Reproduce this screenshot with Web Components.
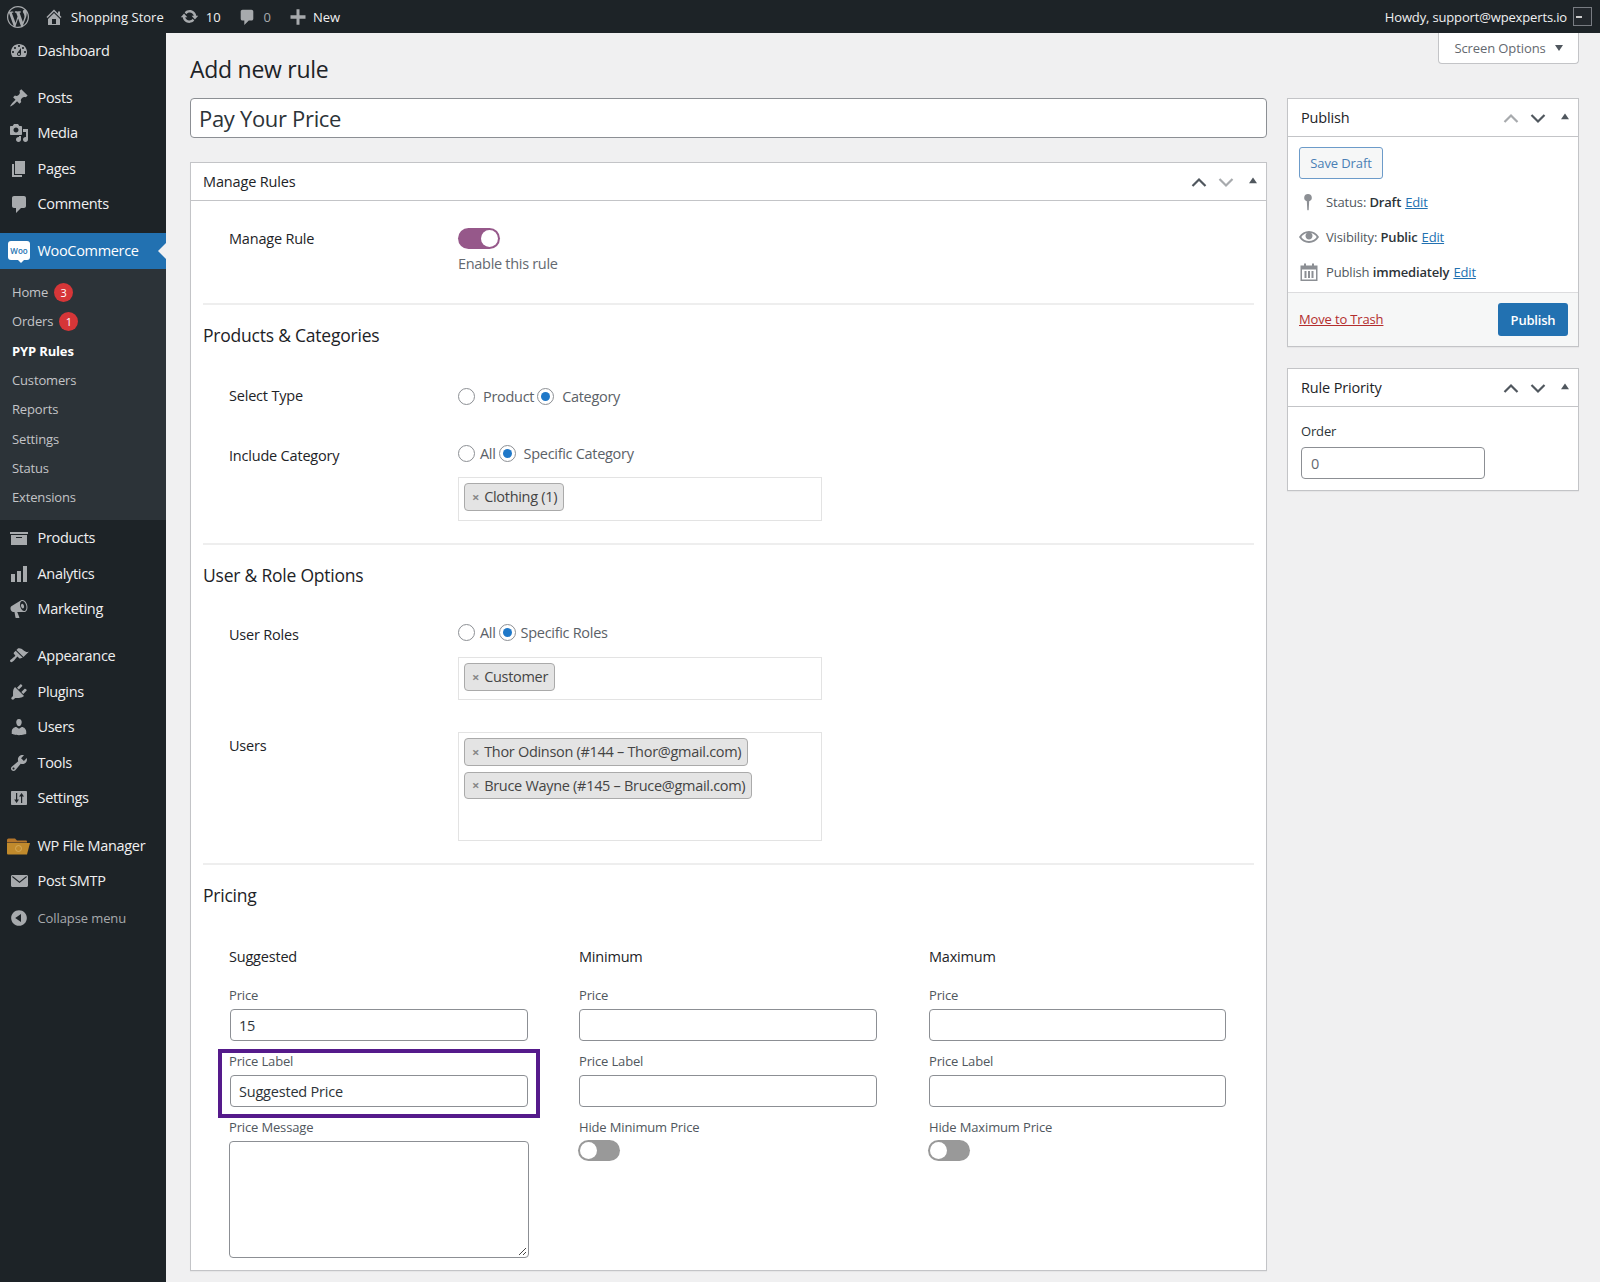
<!DOCTYPE html>
<html lang="en"><head><meta charset="utf-8"><title>Add new rule</title>
<style>
html,body{margin:0;padding:0;height:1282px;overflow:hidden;background:#f0f0f1;font-family:"Open Sans","Noto Sans",sans-serif;font-size:14px;color:#1d2327}
</style></head><body>
<wp-app></wp-app>
<script>
const P={
wp:'M20 10c0-5.51-4.49-10-10-10C4.48 0 0 4.49 0 10c0 5.52 4.48 10 10 10 5.51 0 10-4.48 10-10zM7.78 15.37L4.37 6.22c.55-.02 1.17-.08 1.17-.08.5-.06.44-1.13-.06-1.11 0 0-1.45.11-2.37.11-.18 0-.37 0-.58-.01C4.12 2.69 6.87 1.11 10 1.11c2.33 0 4.45.87 6.05 2.34-.68-.11-1.65.39-1.65 1.58 0 .74.45 1.36.9 2.1.35.61.55 1.36.55 2.46 0 1.49-1.4 5-1.4 5l-3.03-8.37c.54-.02.82-.17.82-.17.5-.05.44-1.25-.06-1.22 0 0-1.44.12-2.38.12-.87 0-2.33-.12-2.33-.12-.5-.03-.56 1.2-.06 1.22l.92.08 1.26 3.41zM17.41 10c.24-.64.74-1.87.43-4.25.7 1.29 1.05 2.71 1.05 4.25 0 3.29-1.73 6.24-4.4 7.78.97-2.59 1.94-5.2 2.92-7.78zM6.1 18.09C3.12 16.65 1.11 13.53 1.11 10c0-1.3.23-2.48.72-3.59C3.25 10.3 4.67 14.2 6.1 18.09zm4.03-6.63l2.58 6.98c-.86.29-1.76.45-2.71.45-.79 0-1.57-.11-2.29-.33.81-2.38 1.62-4.74 2.42-7.1z',
home:'M16 8.5l1.53 1.53-1.06 1.06L10 4.62l-6.47 6.47-1.06-1.06L10 2.5l4 4v-2h2v4zm-6-2.46l6 5.99V18H4v-5.97zM12 17v-5H8v5h4z',
update:'M10.2 3.28c3.53 0 6.43 2.61 6.92 6h2.08l-3.5 4-3.5-4h2.32c-.45-1.97-2.21-3.45-4.32-3.45-1.45 0-2.73.71-3.54 1.78L4.95 5.66C6.23 4.2 8.11 3.28 10.2 3.28zm-.4 13.44c-3.52 0-6.43-2.61-6.92-6H.8l3.5-4c1.17 1.33 2.33 2.67 3.5 4H5.48c.45 1.97 2.21 3.45 4.32 3.45 1.45 0 2.73-.71 3.54-1.78l1.71 1.95c-1.28 1.46-3.15 2.38-5.25 2.38z',
comment:'M5 2h10c1.1 0 2 .9 2 2v8c0 1.1-.9 2-2 2h-3l-5 5v-5H5c-1.1 0-2-.9-2-2V4c0-1.1.9-2 2-2z',
plus:'M17.500 8.300v3.400h-6v6H8.500v-6h-6V8.300h6v-6h3v6z',
dashboard:'M3.76 16h12.48c1.1-1.37 1.76-3.11 1.76-5 0-4.42-3.58-8-8-8s-8 3.58-8 8c0 1.89.66 3.63 1.76 5zM10 4c.55 0 1 .45 1 1s-.45 1-1 1-1-.45-1-1 .45-1 1-1zM6 6c.55 0 1 .45 1 1s-.45 1-1 1-1-.45-1-1 .45-1 1-1zm8 0c.55 0 1 .45 1 1s-.45 1-1 1-1-.45-1-1 .45-1 1-1zm-5.37 5.55L12 7v6c0 1.1-.9 2-2 2s-2-.9-2-2c0-.57.24-1.08.63-1.45zM4 10c.55 0 1 .45 1 1s-.45 1-1 1-1-.45-1-1 .45-1 1-1zm12 0c.55 0 1 .45 1 1s-.45 1-1 1-1-.45-1-1 .45-1 1-1zm-5 3c0-.55-.45-1-1-1s-1 .45-1 1 .45 1 1 1 1-.45 1-1z',
post:'M10.44 3.02l1.82-1.82 6.36 6.35-1.83 1.82c-1.05-.68-2.48-.57-3.41.36l-.75.75c-.92.93-1.04 2.35-.35 3.41l-1.83 1.82-2.41-2.41-2.8 2.79c-.42.42-3.38 2.71-3.8 2.29s1.86-3.39 2.28-3.81l2.79-2.79L4.1 9.36l1.83-1.82c1.05.69 2.48.57 3.4-.36l.75-.75c.93-.92 1.05-2.35.36-3.41z',
media:'M13 11V4c0-.55-.45-1-1-1h-1.67L9 1H5L3.67 3H2c-.55 0-1 .45-1 1v7c0 .55.45 1 1 1h10c.55 0 1-.45 1-1zM7 4.5c1.38 0 2.5 1.12 2.5 2.5S8.38 9.5 7 9.5 4.5 8.38 4.5 7 5.62 4.5 7 4.5zM14 6h5v10.5c0 1.38-1.12 2.5-2.5 2.5S14 17.88 14 16.5s1.12-2.5 2.5-2.5c.17 0 .34.02.5.05V9h-3V6zm-4 8.05V13h2v3.5c0 1.38-1.12 2.5-2.5 2.5S7 17.88 7 16.5 8.12 14 9.5 14c.17 0 .34.02.5.05z',
page:'M6 15V2h10v13H6zm-1 1h8v2H3V5h2v11z',
products:'M19 4v2H1V4h18zM2 7h16v10H2V7zm11 3V9H7v1h6z',
chart:'M18 18V2h-4v16h4zm-6 0V7H8v11h4zm-6 0v-8H2v8h4z',
megaphone:'M18.15 5.94c.46 1.62.38 3.22-.02 4.48-.42 1.28-1.26 2.18-2.3 2.48-.16.06-.26.06-.4.06-.06.02-.12.02-.18.02-.06.02-.14.02-.22.02h-6.8l2.22 5.5c.02.14-.06.26-.14.34-.08.1-.24.16-.34.16H6.95c-.1 0-.26-.06-.34-.16-.08-.08-.16-.2-.14-.34l-1-5.5H4.25l-.02-.02c-.5.06-1.08-.18-1.54-.62s-.88-1.08-1.06-1.88c-.24-.8-.2-1.56-.02-2.2.18-.62.58-1.08 1.06-1.3l.02-.02 9-5.4c.1-.06.18-.1.24-.16.06-.04.14-.08.24-.12.16-.08.28-.12.5-.18 1.04-.3 2.24.1 3.22.98s1.84 2.24 2.26 3.86zm-2.58 5.98h-.02c.4-.1.74-.34 1.04-.7.58-.7.86-1.76.86-3.04 0-.64-.1-1.3-.28-1.98-.34-1.36-1.02-2.5-1.78-3.24s-1.68-1.1-2.46-.88c-.82.22-1.4.96-1.7 2-.32 1.04-.28 2.36.06 3.72.38 1.36 1 2.5 1.8 3.24.78.74 1.62 1.1 2.48.88zm-2.54-7.08c.22-.04.42-.02.62.04.38.16.76.48 1.02 1s.42 1.2.42 1.78c0 .3-.04.56-.12.8-.18.48-.44.84-.86.94-.34.1-.8-.06-1.14-.4-.36-.34-.68-.84-.86-1.46-.2-.62-.2-1.22-.08-1.7.14-.46.42-.84.92-.96.02 0 .06-.04.08-.04z',
brush:'M14.48 11.06L7.41 3.99l1.5-1.5c.5-.56 2.3-.47 3.51.32 1.21.8 1.43 1.28 2.91 2.1 1.18.64 2.45 1.26 4.45.85zm-.71.71L6.7 4.7 4.93 6.47c-.39.39-.39 1.02 0 1.41l1.06 1.06c.39.39.39 1.03 0 1.42-.6.6-1.43 1.11-2.21 1.69-.35.26-.7.53-1.01.84C1.43 13.23.4 14.75 1.4 15.74c.99.99 2.52-.03 3.82-1.37.31-.31.58-.66.84-1.01.58-.78 1.09-1.61 1.69-2.21.39-.39 1.02-.39 1.41 0l1.06 1.06c.39.39 1.02.39 1.41 0z',
plugin:'M13.11 4.36L9.87 7.6 8 5.73l3.24-3.24c.35-.34 1.05-.2 1.56.32.52.51.66 1.21.31 1.55zm-8 1.77l.91-1.12 9.01 9.01-1.19.84c-.71.71-2.63 1.16-3.82 1.16H6.14L4.9 17.26c-.59.59-1.54.59-2.12 0-.59-.58-.59-1.53 0-2.12l1.24-1.24v-3.88c0-1.13.4-3.19 1.09-3.89zm7.26 3.97l3.24-3.24c.34-.35 1.04-.21 1.55.31.52.51.66 1.21.31 1.55l-3.24 3.25z',
users:'M10 9.25c-2.27 0-2.73-3.44-2.73-3.44C7 4.02 7.82 2 9.97 2c2.16 0 2.98 2.02 2.71 3.81 0 0-.41 3.44-2.68 3.44zm0 2.57L12.72 10c2.39 0 4.52 2.33 4.52 4.53v2.49s-3.65 1.13-7.24 1.13c-3.65 0-7.24-1.13-7.24-1.13v-2.49c0-2.25 1.94-4.48 4.47-4.48z',
tools:'M16.68 9.77c-1.34 1.34-3.3 1.67-4.95.99l-5.41 6.52c-.99.99-2.59.99-3.58 0s-.99-2.59 0-3.57l6.52-5.42c-.68-1.65-.35-3.61.99-4.95 1.28-1.28 3.12-1.62 4.72-1.06l-2.89 2.89 2.82 2.82 2.86-2.87c.53 1.58.18 3.39-1.08 4.65zM3.81 16.21c.4.39 1.04.39 1.43 0 .4-.4.4-1.04 0-1.43-.39-.4-1.03-.4-1.43 0-.39.39-.39 1.03 0 1.43z',
settings:'M18 16V4c0-.55-.45-1-1-1H3c-.55 0-1 .45-1 1v12c0 .55.45 1 1 1h14c.55 0 1-.45 1-1zM7 5h1.200v6.500H10L7.600 15 5.200 11.500H7zM12 15V8.500h-2L12.600 5 15 8.500h-1.800V15z',
mail:'M19 14.5v-9c0-.83-.67-1.5-1.5-1.5H3.49c-.83 0-1.5.67-1.5 1.500v9c0 .83.67 1.5 1.5 1.5H17.5c.83 0 1.5-.67 1.5-1.5zm-1.31-9.11c.33.33.15.67-.03.84L10.500 12.100 3.300 6.230c-.18-.17-.36-.51-.03-.84s.67-.17.95.07l6.280 5.040 6.250-5.040c.28-.24.62-.4.95-.07z',
collapse:'M10 2.16c4.33 0 7.84 3.51 7.84 7.84s-3.51 7.84-7.84 7.84S2.16 14.33 2.16 10 5.71 2.16 10 2.16zm2 11.72V6.12L6.18 9.97z',
pin:'M10 1a4.200 4.200 0 0 1 1.300 8.200L10.800 18.500a.8.8 0 0 1-1.600 0L8.700 9.200A4.200 4.200 0 0 1 10 1z',
eye:'M19.7 9.4C17.7 6 14 3.9 10 3.9S2.3 6 .3 9.4L0 10l.3.6c2 3.4 5.7 5.5 9.7 5.5s7.700-2.100 9.700-5.500l.3-.6-.3-.6zM10 14.100c-3.100 0-6-1.600-7.700-4.100C3.600 8 5.700 6.600 8 6.100c-.9.6-1.500 1.700-1.500 2.900 0 1.900 1.600 3.500 3.500 3.500s3.500-1.600 3.500-3.500c0-1.200-.6-2.300-1.500-2.900 2.300.5 4.400 1.900 5.700 3.900-1.700 2.500-4.600 4.100-7.700 4.100z',
calendar:'M15 3.500h3.500V19h-17V3.500H5V1.500h2v2h6v-2h2v2zM3 7.500V17.500h14V7.500H3zM5.500 9h2v7h-2V9zm3.500 0h2v7H9V9zm3.500 0h2v7h-2V9z',
up:'M3.500 14 10 7.500 16.500 14',down:'M3.500 7 10 13.500 16.500 7',tri:'M5 14l5-7 5 7z'
};
const ic=(n,s=20,c='currentColor')=>`<svg width="${s}" height="${s}" viewBox="0 0 20 20" fill="${c}" aria-hidden="true"><path d="${P[n]}"/></svg>`;
function def(name,css,html){
  customElements.define(name,class extends HTMLElement{
    connectedCallback(){
      if(this.shadowRoot)return;
      const r=this.attachShadow({mode:'open'});
      const g=a=>this.getAttribute(a);
      r.innerHTML=`<style>${css}</style>`+(typeof html==='function'?html(g,this):html);
    }
  });
}
def('wp-adminbar',`
:host{display:flex;align-items:center;justify-content:space-between;height:33px;background:#1d2327;color:#f0f0f1;font-size:13px}
.l,.r{display:flex;align-items:center;height:100%}
.l{letter-spacing:0}.r{letter-spacing:-.15px}
.i{display:flex;align-items:center;color:#a7aaad}
.t{color:#f0f0f1}
.av{width:19px;height:19px;box-sizing:border-box;border:1px solid #787c82;background:#23282d;margin:0 8px 0 6px;display:flex;align-items:center;padding-left:2px}
.av b{display:block;width:6px;height:2px;background:#ccc}
`,()=>`<div class="l">
<span class="i" style="margin-left:7px">${ic('wp',22)}</span>
<span class="i" style="margin-left:15px">${ic('home',20)}</span><span class="t" style="margin-left:7px">Shopping Store</span>
<span class="i" style="margin-left:16px">${ic('update',19)}</span><span class="t" style="margin-left:7px">10</span>
<span class="i" style="margin-left:17px">${ic('comment',18)}</span><span style="margin-left:8px;color:#a7aaad">0</span>
<span class="i" style="margin-left:17px">${ic('plus',20)}</span><span class="t" style="margin-left:5px">New</span>
</div><div class="r"><span class="t">Howdy, support@wpexperts.io</span><span class="av"><b></b></span></div>`);

def('wp-menu-item',`
:host{display:flex;align-items:center;height:35.5px;color:#f0f0f1;font-size:14.5px;letter-spacing:-.32px;position:relative}
:host([current]){height:36px;background:#2271b1;color:#fff}
:host([current])::after{content:"";position:absolute;right:0;top:10px;border:8px solid transparent;border-right-color:#f0f0f1;border-left:0}
:host([dim]){color:#a7aaad;font-size:13px;letter-spacing:-.1px}
.tx{padding-bottom:1px}
.ic{width:37.5px;display:flex;justify-content:flex-start;padding-left:9px;box-sizing:border-box;color:#a7aaad;flex:none}
:host([current]) .ic{color:#fff}
`,(g)=>`<span class="ic">${g('icon')?ic(g('icon'),20):'<slot name="icon"></slot>'}</span><span class="tx"><slot></slot></span>`);

def('wp-submenu-item',`
:host{display:flex;align-items:center;height:29.3px;padding-left:12px;color:#c3c4c7;font-size:13px;letter-spacing:-.15px}
:host([current]){color:#fff;font-weight:700}
.b{display:inline-flex;align-items:center;justify-content:center;width:19px;height:19px;border-radius:50%;background:#d63638;color:#fff;font-size:11px;margin-left:6px;letter-spacing:0}
`,(g)=>`<span class="tx"><slot></slot></span>${g('badge')?`<span class="b">${g('badge')}</span>`:''}`);

def('wp-sidebar',`
:host{display:block;width:166px;flex:none;background:#1d2327;height:1249px}
.sp{height:11.5px}
.sub{background:#2c3338;padding:8.4px 0 8.4px;margin-bottom:.5px}
.woo{width:22px;height:19px;background:#fff;border-radius:3px;color:#2271b1;font:600 8px/19px "Open Sans",sans-serif;letter-spacing:0;text-align:center;display:block;position:relative;margin:-2px 0 0 -1px}
.woo::after{content:"";position:absolute;left:10px;bottom:-3px;border:3px solid transparent;border-top-color:#fff;border-bottom:0}
`,()=>`
<wp-menu-item icon="dashboard">Dashboard</wp-menu-item><div class="sp"></div>
<wp-menu-item icon="post">Posts</wp-menu-item>
<wp-menu-item icon="media">Media</wp-menu-item>
<wp-menu-item icon="page">Pages</wp-menu-item>
<wp-menu-item icon="comment">Comments</wp-menu-item><div style="height:11px"></div>
<wp-menu-item current><span slot="icon" class="woo">Woo</span>WooCommerce</wp-menu-item>
<div class="sub">
<wp-submenu-item badge="3">Home</wp-submenu-item>
<wp-submenu-item badge="1">Orders</wp-submenu-item>
<wp-submenu-item current>PYP Rules</wp-submenu-item>
<wp-submenu-item>Customers</wp-submenu-item>
<wp-submenu-item>Reports</wp-submenu-item>
<wp-submenu-item>Settings</wp-submenu-item>
<wp-submenu-item>Status</wp-submenu-item>
<wp-submenu-item>Extensions</wp-submenu-item>
</div>
<wp-menu-item icon="products">Products</wp-menu-item>
<wp-menu-item icon="chart">Analytics</wp-menu-item>
<wp-menu-item icon="megaphone">Marketing</wp-menu-item><div class="sp"></div>
<wp-menu-item icon="brush">Appearance</wp-menu-item>
<wp-menu-item icon="plugin">Plugins</wp-menu-item>
<wp-menu-item icon="users">Users</wp-menu-item>
<wp-menu-item icon="tools">Tools</wp-menu-item>
<wp-menu-item icon="settings">Settings</wp-menu-item><div style="height:12px"></div>
<wp-menu-item><svg slot="icon" width="25" height="20" viewBox="0 0 25 20" style="margin-left:-3px"><path d="M1 4q0-1.500 1.500-1.500H9l2 2h9q1 0 1 1v1H1z" fill="#b5762a"/><path d="M1 7h23l-3 11.500H2q-1 0-1-1z" fill="#c18a2c"/><circle cx="12.500" cy="12.500" r="3" fill="none" stroke="#d8b062" stroke-width=".8"/></svg>WP File Manager</wp-menu-item>
<wp-menu-item icon="mail">Post SMTP</wp-menu-item>
<wp-menu-item icon="collapse" dim style="margin-top:1.5px">Collapse menu</wp-menu-item>
`);

def('wp-postbox',`
:host{display:block;background:#fff;border:1px solid #c3c4c7;box-shadow:0 1px 1px rgba(0,0,0,.04);box-sizing:border-box}
.h{display:flex;align-items:center;height:38px;box-sizing:border-box;border-bottom:1px solid #c3c4c7;padding-left:var(--hp,12px);font-size:14.5px;letter-spacing:-.15px;color:#1d2327}
.h span{flex:1}
.b{display:flex;width:27px;justify-content:center;color:#50575e}
.b.off{color:#a7aaad}
.b.d{margin-right:.5px}
.last{width:26px}
`,(g)=>`<div class="h"><span>${g('heading')}</span>
<i class="b ${g('off')==='up'?'off':''}">${'<svg width="20" height="20" viewBox="0 0 20 20" fill="none" stroke="currentColor" stroke-width="2.2"><path d="'+P.up+'"/></svg>'}</i>
<i class="b d ${g('off')==='down'?'off':''}">${'<svg width="20" height="20" viewBox="0 0 20 20" fill="none" stroke="currentColor" stroke-width="2.2"><path d="'+P.down+'"/></svg>'}</i>
<i class="b last" style="color:#50575e"><svg width="16" height="16" viewBox="0 0 20 20" fill="currentColor" style="margin-top:-4px"><path d="${P.tri}"/></svg></i>
</div><slot></slot>`);

def('wp-title-input',`
:host{display:flex;align-items:center;height:40px;box-sizing:border-box;background:#fff;border:1px solid #8c8f94;border-radius:4px;padding:0 8px;font-size:22px;letter-spacing:-.32px;color:#2c3338;margin-bottom:24px}
`,`<slot></slot>`);

def('wp-input',`
:host{display:flex;align-items:center;height:32px;box-sizing:border-box;background:#fff;border:1px solid #8c8f94;border-radius:4px;padding:0 9px;font-size:14.5px;letter-spacing:-.2px;color:#2c3338}
:host(.in1){margin:0 -1px 0 1px;padding-left:8px}
`,`<slot></slot>`);

def('wp-textarea',`
:host{display:block;position:relative;height:117px;margin-right:-2px;box-sizing:border-box;background:#fff;border:1px solid #8c8f94;border-radius:4px}
svg{position:absolute;right:1px;bottom:1px}
`,`<svg width="9" height="9" viewBox="0 0 9 9" stroke="#444" fill="none" stroke-width="1"><path d="M1 8 8 1M5 8 8 5"/></svg>`);

def('wp-toggle',`
:host{display:block;width:42px;height:21px;border-radius:11px;background:#999;position:relative;box-sizing:border-box}
:host([on]){background:#96588a}
:host(.tg){margin:-1px 0 0 -1px}
i{position:absolute;top:2px;left:2px;width:17px;height:17px;border-radius:50%;background:#fff}
:host([on]) i{left:23px}
`,`<i></i>`);

def('wp-radio',`
:host{display:inline-block;width:17px;height:17px;box-sizing:border-box;border-radius:50%;border:1px solid #8c8f94;background:#fff;position:relative;flex:none}
:host([checked])::after{content:"";position:absolute;left:3px;top:3px;width:9px;height:9px;border-radius:50%;background:#1f78c8}
`,``);

def('wp-radio-row',`
:host{display:flex;align-items:center;height:20px;color:#5b6167;font-size:14.5px;letter-spacing:-.3px}
`,`<slot></slot>`);

def('wp-tag',`
:host{display:inline-flex;align-items:center;height:27.5px;box-sizing:border-box;border:1px solid #aaa;border-radius:4px;background:#e4e4e4;padding:0 6px 0 7px;color:#444;font-size:14.5px;letter-spacing:-.3px;white-space:nowrap}
i{font-style:normal;color:#888;font-size:13px;margin-right:5px;font-weight:700}
`,`<i>×</i><slot></slot>`);

def('wp-select-box',`
:host{display:flex;flex-direction:column;align-items:flex-start;gap:6px;box-sizing:border-box;width:364px;background:#fff;border:1px solid #e3e3e3;padding:5px}
`,`<slot></slot>`);

def('wp-row',`
:host{display:flex}
.l{width:255px;padding-left:26px;box-sizing:border-box;flex:none;line-height:20px;font-size:14.5px;letter-spacing:-.2px;color:#1d2327;margin-top:var(--lab,0)}
.c{flex:1}
`,(g)=>`<div class="l">${g('label')}</div><div class="c"><slot></slot></div>`);

def('wp-divider',`:host{display:block;height:2px;background:#eee}`,``);
def('wp-section-title',`
:host{display:block;line-height:24px;font-size:17.5px;letter-spacing:-.22px;color:#1d2327}`,`<slot></slot>`);

def('wp-price-col',`
:host{display:block;font-size:13px;color:#50575e;letter-spacing:-.15px}
h4{margin:0 0 18px;font-weight:400;font-size:14.5px;line-height:20px;color:#1d2327;letter-spacing:-.2px}
.lb{line-height:20px;margin-bottom:4px}
.f{margin-bottom:10px}
.hl{position:relative}
.hl::after{content:"";position:absolute;left:-11px;right:-13px;top:-2px;bottom:-11px;border:4px solid #551a8b;pointer-events:none}
`,(g)=>{
 const n=g('name'),hl=g('highlight')!==null,c=hl?'in1':'';
 return `<h4>${n}</h4>
 <div class="f"><div class="lb">Price</div><wp-input class="${c}">${g('price')||''}</wp-input></div>
 <div class="f ${hl?'hl':''}"><div class="lb">Price Label</div><wp-input class="${c}">${g('plabel')||''}</wp-input></div>
 <div class="lb">${hl?'Price Message':'Hide '+n+' Price'}</div>${hl?'<wp-textarea></wp-textarea>':'<wp-toggle class="tg"></wp-toggle>'}`;
});

def('wp-manage-rules',`
:host{display:block}
.b{padding:0 12px 12px}
.mt{color:#646970;font-size:14.5px;letter-spacing:-.3px;line-height:20px;margin-top:5px}
.t{margin:0 3px 0 8px}
.grid{display:grid;grid-template-columns:298px 298px 297px;column-gap:52px;padding-left:26px;margin-top:40px}
`,()=>`<wp-postbox heading="Manage Rules" off="down"><div class="b">
<wp-row label="Manage Rule" style="padding-top:27px;--lab:1px"><wp-toggle on></wp-toggle><div class="mt">Enable this rule</div></wp-row>
<wp-divider style="margin-top:29px"></wp-divider>
<wp-section-title style="margin-top:18px">Products &amp; Categories</wp-section-title>
<wp-row label="Select Type" style="margin-top:39px"><wp-radio-row><wp-radio></wp-radio><span class="t">Product</span><wp-radio checked></wp-radio><span style="margin-left:8px">Category</span></wp-radio-row></wp-row>
<wp-row label="Include Category" style="margin-top:37px;--lab:3px"><wp-radio-row><wp-radio></wp-radio><span style="margin:0 3px 0 5px">All</span><wp-radio checked></wp-radio><span style="margin-left:8px">Specific Category</span></wp-radio-row>
<wp-select-box style="margin-top:14px;height:44px"><wp-tag>Clothing (1)</wp-tag></wp-select-box></wp-row>
<wp-divider style="margin-top:22px"></wp-divider>
<wp-section-title style="margin-top:18px">User &amp; Role Options</wp-section-title>
<wp-row label="User Roles" style="margin-top:35px;--lab:3px"><wp-radio-row><wp-radio></wp-radio><span style="margin:0 3px 0 5px">All</span><wp-radio checked></wp-radio><span style="margin-left:5px">Specific Roles</span></wp-radio-row>
<wp-select-box style="margin-top:15px;height:43px"><wp-tag>Customer</wp-tag></wp-select-box></wp-row>
<wp-row label="Users" style="margin-top:32px;--lab:4px"><wp-select-box style="height:109px"><wp-tag>Thor Odinson (#144 – Thor@gmail.com)</wp-tag><wp-tag>Bruce Wayne (#145 – Bruce@gmail.com)</wp-tag></wp-select-box></wp-row>
<wp-divider style="margin-top:22px"></wp-divider>
<wp-section-title style="margin-top:18px">Pricing</wp-section-title>
<div class="grid">
<wp-price-col name="Suggested" price="15" plabel="Suggested Price" highlight></wp-price-col>
<wp-price-col name="Minimum"></wp-price-col>
<wp-price-col name="Maximum"></wp-price-col>
</div>
</div></wp-postbox>`);

def('wp-publish-box',`
:host{display:block;margin-bottom:21px;--hp:13px}
.body{padding:10px 11px 0 11px}
.sd{display:inline-flex;align-items:center;justify-content:center;width:84px;height:32px;box-sizing:border-box;border:1px solid #6c9bc9;border-radius:3px;background:#f6f7f7;color:#4a7fb5;font-size:13px;letter-spacing:-.1px}
.m{display:flex;align-items:center;height:35px;font-size:13px;color:#50575e;letter-spacing:-.15px;white-space:pre}
.m .i{width:27px;flex:none;display:flex;color:#8c8f94}
.m b{font-weight:600;color:#2c3338}
.m a{color:#2271b1;text-decoration:underline;margin-left:4px}
.list{margin-top:5px;padding-bottom:3px}
.f{display:flex;align-items:center;justify-content:space-between;height:54px;box-sizing:border-box;background:#f6f7f7;border-top:1px solid #dcdcde;padding:0 10px 0 11px}
.tr{color:#b32d2e;text-decoration:underline;font-size:13px;letter-spacing:-.15px;padding-bottom:2px}
.p{display:flex;align-items:center;justify-content:center;width:70px;height:33px;border-radius:3px;background:#2271b1;color:#fff;font-size:13px;font-weight:600;letter-spacing:-.2px}
`,()=>`<wp-postbox heading="Publish" off="up">
<div class="body"><span class="sd">Save Draft</span>
<div class="list">
<div class="m"><span class="i">${ic('pin',18)}</span>Status: <b>Draft</b><a>Edit</a></div>
<div class="m"><span class="i">${ic('eye',20)}</span>Visibility: <b>Public</b><a>Edit</a></div>
<div class="m"><span class="i">${ic('calendar',20)}</span>Publish <b>immediately</b><a>Edit</a></div>
</div></div>
<div class="f"><span class="tr">Move to Trash</span><span class="p">Publish</span></div>
</wp-postbox>`);

def('wp-priority-box',`
:host{display:block;--hp:13px}
.b{padding:14px 12px 11px 13px}
.l{font-size:13px;line-height:20px;margin-bottom:6px;color:#2c3338;letter-spacing:-.15px}
wp-input{width:184px;color:#646970}
`,()=>`<wp-postbox heading="Rule Priority"><div class="b"><div class="l">Order</div><wp-input>0</wp-input></div></wp-postbox>`);

def('wp-app',`
:host{display:block;height:1282px;overflow:hidden}
.w{display:flex}
.c{flex:1;min-width:0;padding-left:24px}
.top{display:flex;justify-content:space-between;height:52px;padding-right:21px}
h1{margin:0;align-self:flex-end;font-weight:400;font-size:23px;line-height:32px;letter-spacing:-.27px;color:#1d2327}
.so{display:flex;align-items:center;justify-content:center;gap:9px;width:141px;height:31px;box-sizing:border-box;background:#fff;border:1px solid #c3c4c7;border-top:0;border-radius:0 0 4px 4px;color:#646970;font-size:13px;letter-spacing:-.1px}
.so i{border:4.5px solid transparent;border-top:6px solid #50575e;border-bottom:0;display:block}
.g{display:grid;grid-template-columns:1077px 292px;column-gap:20px;margin-top:13px}
`,()=>`<wp-adminbar></wp-adminbar><div class="w"><wp-sidebar></wp-sidebar><div class="c">
<div class="top"><h1>Add new rule</h1><div class="so">Screen Options<i></i></div></div>
<div class="g"><div><wp-title-input>Pay Your Price</wp-title-input><wp-manage-rules></wp-manage-rules></div>
<div><wp-publish-box></wp-publish-box><wp-priority-box></wp-priority-box></div></div>
</div></div>`);
</script>
</body></html>
